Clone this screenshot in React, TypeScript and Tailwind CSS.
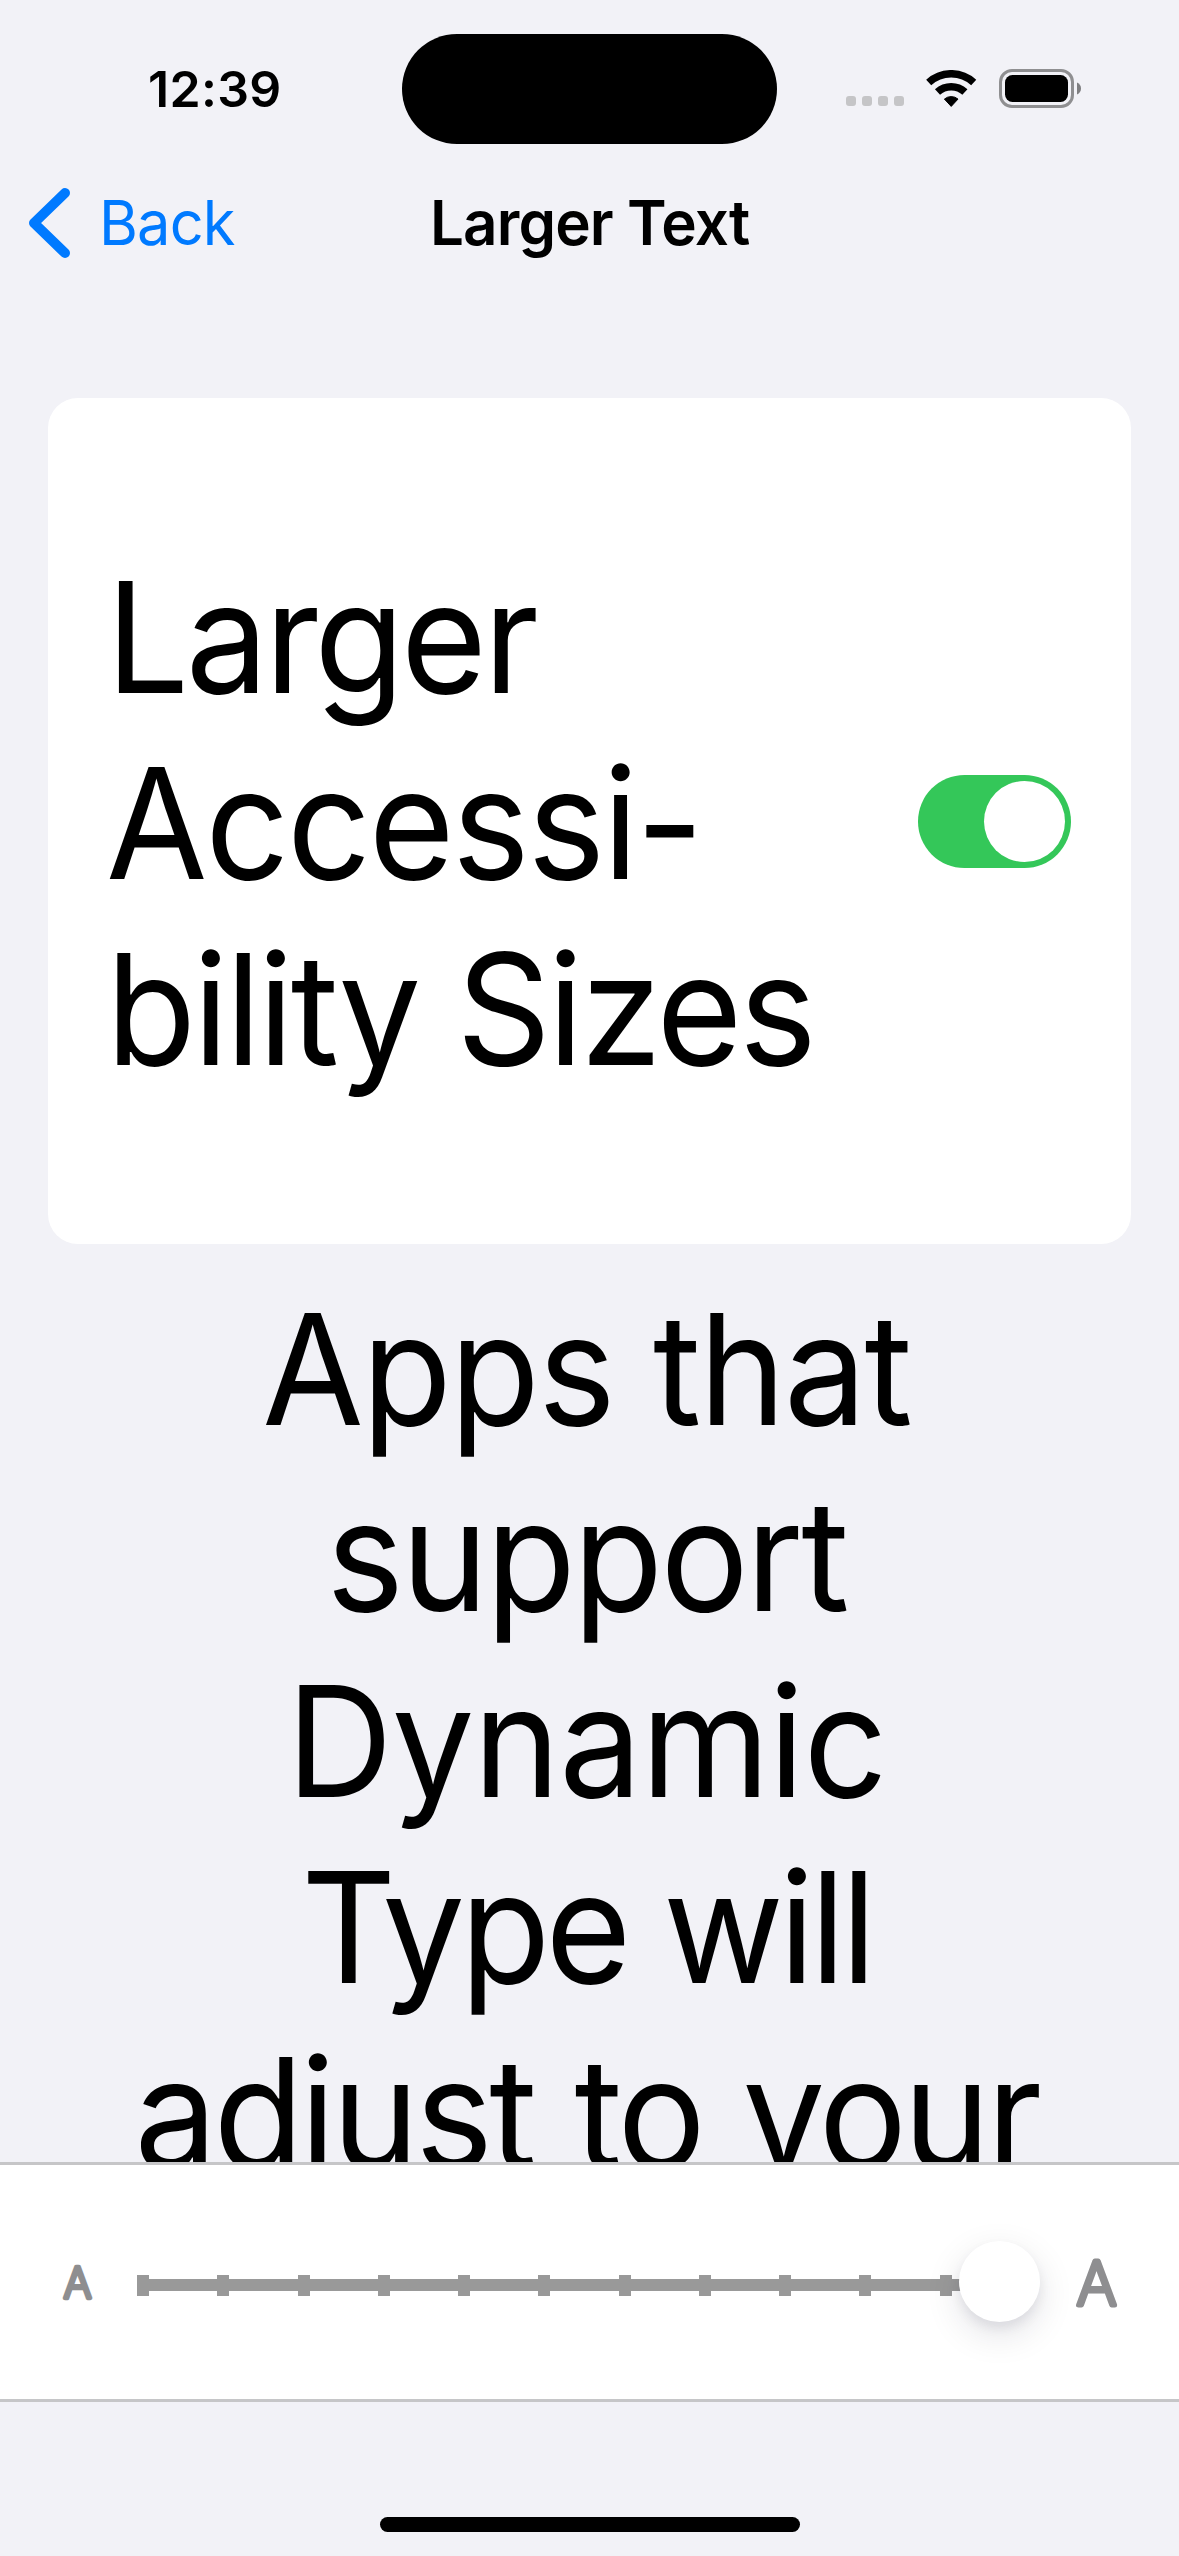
import { clsx } from 'clsx'

const TITLE_LINES = [
  { text: 'Larger', tracking: 'tracking-[-3.6px]' },
  { text: 'Accessi-', tracking: 'tracking-[-2.4px]' },
  { text: 'bility Sizes', tracking: 'tracking-[-3.2px]' },
]

const FOOTNOTE_LINES = [
  { text: 'Apps that', tracking: 'tracking-[-2.1px]' },
  { text: 'support', tracking: 'tracking-[-2.75px]' },
  { text: 'Dynamic', tracking: 'tracking-[-1px]' },
  { text: 'Type will', tracking: 'tracking-[-4.9px]' },
  { text: 'adjust to your', tracking: 'tracking-[-3.8px] [word-spacing:3px]' },
]

const TICKS = Array.from({ length: 12 }, (_, i) => i)

function WifiIcon() {
  return (
    <svg width="51" height="38" viewBox="0 0 51 38" fill="none" stroke="black">
      <path d="M2.7 12.5A33.25 33.25 0 0 1 47.7 12.5" strokeWidth="7.5" />
      <path d="M11.5 22.1A20.25 20.25 0 0 1 38.9 22.1" strokeWidth="7.5" />
      <path
        d="M25.2 36.4L18.4 29.1A10.4 10.4 0 0 1 32 29.1Z"
        fill="black"
        strokeWidth="1"
        strokeLinejoin="round"
      />
    </svg>
  )
}

function BatteryIcon() {
  return (
    <svg width="83" height="39" viewBox="0 0 83 39">
      <rect x="1.5" y="1.5" width="72" height="36" rx="11.5" fill="none" stroke="#8f8f91" strokeWidth="3" />
      <rect x="6" y="6" width="63" height="27" rx="7.5" fill="black" />
      <path d="M78 13.5C80.6 14.6 82 16.8 82 19.5C82 22.2 80.6 24.4 78 25.5Z" fill="#7f7f81" />
    </svg>
  )
}

function StatusBar() {
  return (
    <div className="flex h-[177px] items-center">
      <div className="w-[402px] pl-[148px] text-[50px] leading-none font-semibold tracking-[0.3px]">12:39</div>
      <div className="mt-px h-[110px] w-[375px] rounded-full bg-black" />
      <div className="flex items-center gap-[22px] pl-[69px]">
        <div className="flex gap-1.5 pt-[25px]">
          {[0, 1, 2, 3].map((dot) => (
            <span key={dot} className="size-2.5 rounded-[3px] bg-[#c5c5c7]" />
          ))}
        </div>
        <WifiIcon />
        <BatteryIcon />
      </div>
    </div>
  )
}

function NavBar() {
  return (
    <div className="grid h-[90px] grid-cols-[1fr_auto_1fr] items-center pt-0.5 text-[62px] leading-none">
      <button className="flex items-center gap-[27px] pl-[27px] text-[#007aff]">
        <svg width="45" height="72" viewBox="0 0 45 72" fill="none">
          <path
            d="M38 6L7 36L38 66"
            stroke="currentColor"
            strokeWidth="10"
            strokeLinecap="round"
            strokeLinejoin="round"
          />
        </svg>
        <span className="origin-left scale-x-[0.96] tracking-[-0.9px]">Back</span>
      </button>
      <h1 className="scale-x-[0.97] font-semibold tracking-[-0.9px]">Larger Text</h1>
    </div>
  )
}

function Toggle() {
  return (
    <button
      role="switch"
      aria-checked="true"
      aria-label="Larger Accessibility Sizes"
      className="flex h-[93px] w-[153px] items-center justify-end rounded-full bg-[#34c759] p-1.5"
    >
      <span className="size-[81px] rounded-full bg-white" />
    </button>
  )
}

// Letter with rounded stroke ends for the two sides of the slider
function SizeLetter({ large = false }: { large?: boolean }) {
  return (
    <svg
      width={large ? 45 : 35}
      height={large ? 49 : 35}
      className="shrink-0 overflow-visible font-extralight"
      fill="#8e8e90"
      stroke="#8e8e90"
      strokeLinejoin="round"
    >
      <text
        x={large ? 22.5 : 17.5}
        y={large ? 46.5 : 33}
        textAnchor="middle"
        fontSize={large ? 60.5 : 42}
        strokeWidth={large ? 5 : 4.5}
      >
        A
      </text>
    </svg>
  )
}

function TextSizeSlider() {
  return (
    <div className="flex h-60 items-center border-y-[3px] border-[#c6c6c8] bg-white pl-[60px]">
      <SizeLetter />
      <div className="relative mt-[7px] ml-[42px] h-[21px] w-[895px]">
        <div className="flex h-full justify-between">
          {TICKS.map((tick) => (
            <span key={tick} className="w-3 bg-[#999999]" />
          ))}
        </div>
        <div className="absolute inset-x-0 top-1 h-3 bg-[#999999]" />
        <div className="absolute top-[-34px] left-[822px] size-[81px] rounded-full bg-white shadow-[0_12px_36px_rgba(0,0,40,0.12),0_6px_12px_rgba(0,0,40,0.07)]" />
      </div>
      <div className="ml-[42px]">
        <SizeLetter large />
      </div>
    </div>
  )
}

export default function App() {
  return (
    <div className="flex h-[2556px] w-[1179px] flex-col overflow-hidden bg-[#f2f2f7] font-['Inter','Liberation_Sans',sans-serif] text-black">
      <StatusBar />
      <NavBar />

      <main className="h-[1895px] overflow-hidden px-12 pt-[131px] text-[154px] leading-[186px]">
        <section className="flex h-[846px] items-center justify-between rounded-[30px] bg-white pr-[60px] pl-[58px]">
          <p className="origin-left scale-x-[0.955] pt-1">
            {TITLE_LINES.map((line) => (
              <span key={line.text} className={clsx('block whitespace-nowrap', line.tracking)}>
                {line.text}
              </span>
            ))}
          </p>
          <Toggle />
        </section>

        <p className="mt-8 mr-1.5 scale-x-[0.955] text-center">
          {FOOTNOTE_LINES.map((line) => (
            <span key={line.text} className={clsx('block whitespace-nowrap', line.tracking)}>
              {line.text}
            </span>
          ))}
        </p>
      </main>

      <TextSizeSlider />

      <div className="flex flex-1 items-end justify-center pb-6">
        <div className="h-[15px] w-[420px] rounded-full bg-black" />
      </div>
    </div>
  )
}
